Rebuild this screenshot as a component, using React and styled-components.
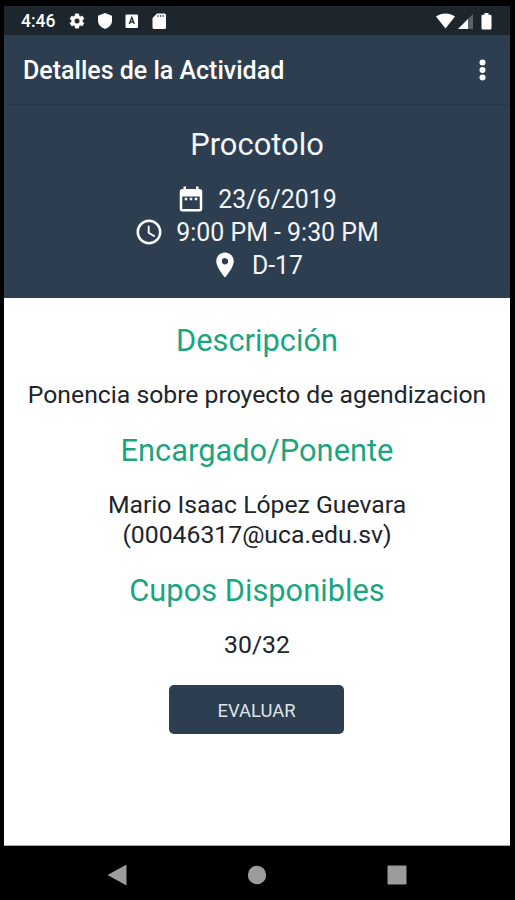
import React from 'react';
import styled, { createGlobalStyle } from 'styled-components';

const Global = createGlobalStyle`
  * { box-sizing: border-box; }
  body { margin: 0; background: #000; font-family: Roboto, "Liberation Sans", sans-serif; }
  svg { display: block; flex: none; }
`;

const Device = styled.div`
  width: 515px;
  height: 900px;
  padding: 6px 5px 0 4px;
  background: #000;
  display: flex;
  flex-direction: column;
  overflow: hidden;
`;

const StatusBar = styled.div`
  height: 29px;
  flex: none;
  background: #1d262d;
  color: #fff;
  display: flex;
  align-items: center;
  justify-content: space-between;
  padding: 0 17px;
`;

const Clock = styled.span`
  font-size: 17.5px;
  line-height: 29px;
  font-weight: 500;
  padding-top: 1px;
`;

const StatusLeft = styled.div`
  display: flex;
  align-items: center;
  gap: 13px;
`;

const Toolbar = styled.header`
  height: 70px;
  flex: none;
  background: #2c3e50;
  color: #fff;
  display: flex;
  align-items: center;
  justify-content: space-between;
  padding: 1px 24px 0 19px;
  border-bottom: 1px solid #263747;
`;

const ToolbarTitle = styled.h1`
  margin: 0;
  padding-top: 2px;
  font-size: 25px;
  font-weight: 500;
  line-height: 32px;
  white-space: nowrap;
`;

const Summary = styled.section`
  height: 193px;
  flex: none;
  background: #2c3e50;
  color: #f3f5f8;
  display: flex;
  flex-direction: column;
  align-items: center;
  padding-top: 20px;
`;

const SummaryTitle = styled.h2`
  margin: 0 0 18px;
  font-size: 30.9px;
  font-weight: 400;
  line-height: 40px;
`;

const InfoRow = styled.div`
  height: 33px;
  display: flex;
  align-items: center;
  gap: 12px;
  padding-right: 1px;
  font-size: 24.9px;
  line-height: 33px;
  white-space: nowrap;

  svg {
    margin-bottom: 2px;
  }
`;

const Content = styled.main`
  height: 548px;
  flex: none;
  background: #fff;
  display: flex;
  flex-direction: column;
  align-items: center;
  padding-top: 22px;
  border-bottom: 1px solid #a9abac;
`;

const Heading = styled.h3`
  margin: 0;
  font-size: 30.8px;
  font-weight: 400;
  line-height: 41px;
  color: #1ba57f;
  white-space: nowrap;
`;

const Body = styled.p`
  margin: 19px 0 21px;
  font-size: 24.75px;
  line-height: 29.4px;
  color: #20242b;
  text-align: center;
  white-space: nowrap;
`;

const Line = styled.span`
  display: block;
`;

const ActionButton = styled.button`
  width: 175px;
  height: 49px;
  margin: 4px 1px 0 0;
  padding: 0;
  border: 0;
  border-radius: 5px;
  background: #2c3e50;
  color: #dfe4ea;
  font: 400 18.4px/51px Roboto, "Liberation Sans", sans-serif;
`;

const NavBar = styled.nav`
  flex: 1;
  display: flex;
  align-items: center;
  justify-content: center;
  gap: 120px;
  padding: 3px 1px 0 0;
`;

const Material = ({ d }) => (
  <svg width="30" height="30" viewBox="0 0 24 24" fill="#fff">
    <path fillRule="evenodd" d={d} />
  </svg>
);

const GEAR =
  'M19.14 12.94c.04-.3.06-.61.06-.94s-.02-.64-.07-.94l2.03-1.58c.18-.14.23-.41.12-.61l-1.92-3.32c-.12-.22-.37-.29-.59-.22l-2.39.96c-.5-.38-1.03-.7-1.62-.94l-.36-2.54A.48.48 0 0 0 13.92 2.4h-3.84c-.24 0-.43.17-.47.41l-.36 2.54c-.59.24-1.13.57-1.62.94l-2.39-.96c-.22-.08-.47 0-.59.22L2.74 8.87c-.12.21-.08.47.12.61l2.03 1.58c-.05.3-.09.63-.09.94s.02.64.07.94l-2.03 1.58c-.18.14-.23.41-.12.61l1.92 3.32c.12.22.37.29.59.22l2.39-.96c.5.38 1.03.7 1.62.94l.36 2.54c.05.24.24.41.48.41h3.84c.24 0 .44-.17.47-.41l.36-2.54c.59-.24 1.13-.56 1.62-.94l2.39.96c.22.08.47 0 .59-.22l1.92-3.32c.12-.22.07-.47-.12-.61zM12 15.6a3.6 3.6 0 1 1 0-7.2 3.6 3.6 0 0 1 0 7.2z';
const CALENDAR =
  'M9 11H7v2h2zm4 0h-2v2h2zm4 0h-2v2h2zm2-7h-1V2h-2v2H8V2H6v2H5a2 2 0 0 0-2 2v14a2 2 0 0 0 2 2h14a2 2 0 0 0 2-2V6a2 2 0 0 0-2-2zm0 16H5V10h14z';
const TIME =
  'M11.99 2C6.47 2 2 6.48 2 12s4.47 10 9.99 10C17.52 22 22 17.52 22 12S17.52 2 11.99 2zM12 20a8 8 0 1 1 0-16 8 8 0 0 1 0 16zm.5-13H11v6l5.25 3.15.75-1.23-4.5-2.67z';
const PLACE =
  'M12 2C8.13 2 5 5.13 5 9c0 5.25 7 13 7 13s7-7.75 7-13c0-3.87-3.13-7-7-7zm0 9.5a2.5 2.5 0 1 1 0-5 2.5 2.5 0 0 1 0 5z';

const StatusLeftIcons = () => (
  <svg width="104" height="20" viewBox="0 0 104 20" fill="#fff">
    <svg x="0" y="1" width="18" height="18" viewBox="0 0 24 24">
      <path fillRule="evenodd" d={GEAR} stroke="#fff" strokeWidth="0.6" />
    </svg>
    <path d="M37 2 L44 4.7 V9.6 C44 13.8 41 16.8 37 18 C33 16.8 30 13.8 30 9.6 V4.7Z" />
    <rect x="57.5" y="3.5" width="12.5" height="13.5" rx="1" />
    <path d="M61.3 13 L63.8 6.5 L66.3 13 M62.2 11 H65.4" fill="none" stroke="#263238" strokeWidth="1.4" />
    <path fillRule="evenodd" d="M89 2.5 H96.5 Q98 2.5 98 4 V16.5 Q98 18 96.5 18 H86 Q84.5 18 84.5 16.5 V7Z M89.4 4.2V5.8H90.6V4.2Z M91.9 4.2V5.8H93.1V4.2Z M94.4 4.2V5.8H95.6V4.2Z" />
  </svg>
);

const StatusRightIcons = () => (
  <svg width="58" height="20" viewBox="0 0 58 20" fill="#fff">
    <path d="M1 5.5 C6.5 1.6 14.5 1.6 20 5.5 L10.5 17.5Z" />
    <path d="M38 3 V18 H23Z" fill="#5b6267" />
    <path d="M33 8 V18 H23Z" />
    <path d="M49.5 2 H53.5 V3.8 H55.3 Q56.5 3.8 56.5 5 V17 Q56.5 18.5 55.3 18.5 H47.7 Q46.5 18.5 46.5 17 V5 Q46.5 3.8 47.7 3.8 H49.5Z" />
  </svg>
);

export default function App() {
  return (
    <>
      <Global />
      <Device>
        <StatusBar>
          <StatusLeft>
            <Clock>4:46</Clock>
            <StatusLeftIcons />
          </StatusLeft>
          <StatusRightIcons />
        </StatusBar>
        <Toolbar>
          <ToolbarTitle>Detalles de la Actividad</ToolbarTitle>
          <svg width="8" height="24" viewBox="0 0 8 24" fill="#fff">
            <circle cx="4.5" cy="4.5" r="3" />
            <circle cx="4.5" cy="12" r="3" />
            <circle cx="4.5" cy="19.5" r="3" />
          </svg>
        </Toolbar>
        <Summary>
          <SummaryTitle>Procotolo</SummaryTitle>
          <InfoRow>
            <Material d={CALENDAR} />
            <span>23/6/2019</span>
          </InfoRow>
          <InfoRow>
            <Material d={TIME} />
            <span>9:00 PM - 9:30 PM</span>
          </InfoRow>
          <InfoRow>
            <Material d={PLACE} />
            <span>D-17</span>
          </InfoRow>
        </Summary>
        <Content>
          <Heading>Descripción</Heading>
          <Body>
            <Line>Ponencia sobre proyecto de agendizacion</Line>
          </Body>
          <Heading>Encargado/Ponente</Heading>
          <Body>
            <Line>Mario Isaac López Guevara</Line>
            <Line>(00046317@uca.edu.sv)</Line>
          </Body>
          <Heading>Cupos Disponibles</Heading>
          <Body>
            <Line>30/32</Line>
          </Body>
          <ActionButton>EVALUAR</ActionButton>
        </Content>
        <NavBar>
          <svg width="20" height="22" viewBox="0 0 20 22" fill="#9c9c9c">
            <path d="M0.5 11 L19.5 0.5 V21.5Z" />
          </svg>
          <svg width="20" height="20" viewBox="0 0 20 20" fill="#9c9c9c">
            <circle cx="10" cy="10" r="9.2" />
          </svg>
          <svg width="20" height="20" viewBox="0 0 20 20" fill="#9c9c9c">
            <rect x="0.5" y="0.5" width="19" height="19" rx="1" />
          </svg>
        </NavBar>
      </Device>
    </>
  );
}
